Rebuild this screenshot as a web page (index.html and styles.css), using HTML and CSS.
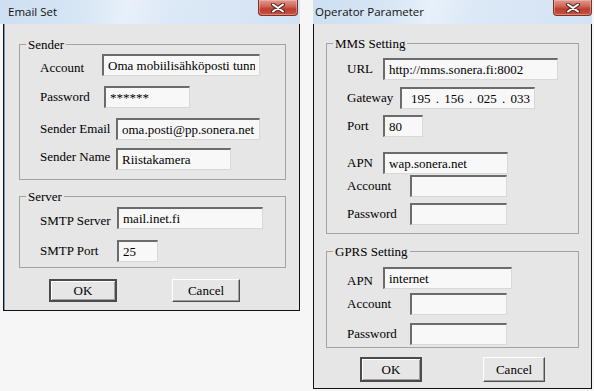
FILE: index.html
```html
<!DOCTYPE html>
<html lang="fi">
<head>
  <meta charset="UTF-8" />
  <title>Email Set / Operator Parameter</title>
  <link rel="stylesheet" href="styles.css">
</head>
<body>
  <div class="desk">

    <section class="window email">
      <header class="titlebar">
        <span class="title">Email Set</span>
        <button class="close" aria-label="Close">
          <svg width="14" height="10" viewBox="0 0 14 10">
            <path d="M2 1.5 L12 8.5 M12 1.5 L2 8.5" stroke="#5b2b27" stroke-width="4" stroke-linecap="round"/>
            <path d="M2 1.5 L12 8.5 M12 1.5 L2 8.5" stroke="#fff" stroke-width="2" stroke-linecap="round"/>
          </svg>
        </button>
      </header>
      <div class="client">
        <fieldset class="group sender">
          <legend>Sender</legend>
          <div class="row mt2">
            <label class="lbl w62 low">Account</label>
            <input class="field f158" type="text" value="Oma mobiilisähköposti tunnus" readonly>
          </div>
          <div class="row mt10">
            <label class="lbl w64">Password</label>
            <input class="field f86" type="text" value="******" readonly>
          </div>
          <div class="row mt10">
            <label class="lbl w76">Sender Email</label>
            <input class="field f144" type="text" value="oma.posti@pp.sonera.net" readonly>
          </div>
          <div class="row mt8">
            <label class="lbl w76 high">Sender Name</label>
            <input class="field f115" type="text" value="Riistakamera" readonly>
          </div>
        </fieldset>

        <fieldset class="group server">
          <legend>Server</legend>
          <div class="row mt3">
            <label class="lbl w77 low">SMTP Server</label>
            <input class="field f146" type="text" value="mail.inet.fi" readonly>
          </div>
          <div class="row mt11">
            <label class="lbl w77">SMTP Port</label>
            <input class="field f41" type="text" value="25" readonly>
          </div>
        </fieldset>

        <div class="buttons">
          <button class="btn default">OK</button>
          <button class="btn">Cancel</button>
        </div>
      </div>
    </section>

    <section class="window operator">
      <header class="titlebar">
        <span class="title">Operator Parameter</span>
        <button class="close" aria-label="Close">
          <svg width="14" height="10" viewBox="0 0 14 10">
            <path d="M2 1.5 L12 8.5 M12 1.5 L2 8.5" stroke="#5b2b27" stroke-width="4" stroke-linecap="round"/>
            <path d="M2 1.5 L12 8.5 M12 1.5 L2 8.5" stroke="#fff" stroke-width="2" stroke-linecap="round"/>
          </svg>
        </button>
      </header>
      <div class="client">
        <fieldset class="group mms">
          <legend>MMS Setting</legend>
          <div class="row mt7">
            <label class="lbl w36">URL</label>
            <input class="field f175" type="text" value="http://mms.sonera.fi:8002" readonly>
          </div>
          <div class="row mt7">
            <label class="lbl w53">Gateway</label>
            <div class="field ip f135">
              <span>195</span><span class="dot">.</span><span>156</span><span class="dot">.</span><span>025</span><span class="dot">.</span><span>033</span>
            </div>
          </div>
          <div class="row mt6">
            <label class="lbl w36">Port</label>
            <input class="field f40" type="text" value="80" readonly>
          </div>
          <div class="row mt15">
            <label class="lbl w36">APN</label>
            <input class="field f125" type="text" value="wap.sonera.net" readonly>
          </div>
          <div class="row mt1">
            <label class="lbl w63">Account</label>
            <input class="field f97" type="text" value="" readonly>
          </div>
          <div class="row mt6">
            <label class="lbl w63">Password</label>
            <input class="field f97" type="text" value="" readonly>
          </div>
        </fieldset>

        <fieldset class="group gprs">
          <legend>GPRS Setting</legend>
          <div class="row mt8">
            <label class="lbl w36 low">APN</label>
            <input class="field f129" type="text" value="internet" readonly>
          </div>
          <div class="row mt4">
            <label class="lbl w63">Account</label>
            <input class="field f97" type="text" value="" readonly>
          </div>
          <div class="row mt8">
            <label class="lbl w63">Password</label>
            <input class="field f97" type="text" value="" readonly>
          </div>
        </fieldset>

        <div class="buttons">
          <button class="btn default">OK</button>
          <button class="btn">Cancel</button>
        </div>
      </div>
    </section>

  </div>
</body>
</html>
```

FILE: styles.css
```css
* {
  box-sizing: border-box;
}

body {
  margin: 0;
  background-color: #f6f6f6;
  font-family: 'Liberation Serif', 'Times New Roman', serif;
  font-size: 13px;
  color: #000;
}

.desk {
  display: flex;
  align-items: flex-start;
  height: 391px;
  overflow: hidden;
}

/* window frame */

.window.email {
  width: 300px;
}

.window.operator {
  width: 279px;
  margin-left: 13px;
}

.titlebar {
  height: 24px;
  display: flex;
  align-items: flex-start;
  background: linear-gradient(100deg, #cddff2 0%, #d8e6f5 28%, #e8f0fa 42%, #dce8f6 58%, #d3e3f4 100%);
}

.title {
  font-family: 'Open Sans', 'Noto Sans', sans-serif;
  font-size: 11.5px;
  line-height: 23px;
  color: #111;
}

.email .title {
  padding-left: 8px;
}

.operator .title {
  padding-left: 2px;
}

.close {
  margin-left: auto;
  width: 40px;
  height: 16px;
  padding: 0;
  display: flex;
  align-items: center;
  justify-content: center;
  border: 1px solid #7d3128;
  border-top: none;
  border-radius: 0 0 4px 4px;
  background: linear-gradient(#de9a8f 0%, #cf6a5c 40%, #bb3f30 60%, #c5533f 100%);
  box-shadow: inset 0 0 0 1px rgba(255, 200, 190, 0.45);
}

.email .close {
  margin-right: 2px;
}

.operator .close {
  width: 39px;
}

.client {
  background-color: #e6e6e6;
  border: 1px solid #111;
  border-top: none;
}

.email .client {
  margin-left: 3px;
  padding: 13px 13px 8px 15px;
  box-shadow: inset 1px 0 #7f9db9;
}

.operator .client {
  padding: 12px 12px 6px 12px;
}

/* group boxes */

.group {
  margin: 0;
  padding: 0 0 0 20px;
  border: 1px solid #a3a3a3;
  min-width: 0;
}

.group legend {
  margin-left: -14px;
  padding: 0 2px;
  font-size: 13px;
  line-height: 15px;
}

.sender {
  padding-bottom: 9px;
}

.server {
  margin-top: 9px;
  padding-bottom: 5px;
}

.mms {
  padding-bottom: 8px;
}

.gprs {
  margin-top: 10px;
  padding-bottom: 2px;
}

/* rows */

.row {
  display: flex;
  align-items: center;
  height: 22px;
}

.mt1 { margin-top: 1px; }
.mt2 { margin-top: 2px; }
.mt3 { margin-top: 3px; }
.mt4 { margin-top: 4px; }
.mt6 { margin-top: 6px; }
.mt7 { margin-top: 7px; }
.mt8 { margin-top: 8px; }
.mt10 { margin-top: 10px; }
.mt11 { margin-top: 11px; }
.mt15 { margin-top: 15px; }

.lbl {
  flex: none;
  white-space: nowrap;
}

.lbl.low {
  padding-top: 6px;
}

.lbl.high {
  padding-bottom: 4px;
}

.w36 { width: 36px; }
.w53 { width: 53px; }
.w62 { width: 62px; }
.w63 { width: 63px; }
.w64 { width: 64px; }
.w76 { width: 76px; }
.w77 { width: 77px; }

.field {
  flex: none;
  height: 22px;
  margin: 0;
  padding: 0 4px;
  border-style: solid;
  border-width: 2px 1px 1px 2px;
  border-color: #6b6b6b #d8d8d8 #d8d8d8 #6b6b6b;
  background-color: #f8f8f8;
  font-family: 'Liberation Serif', 'Times New Roman', serif;
  font-size: 13px;
  color: #000;
  outline: none;
  overflow: hidden;
  white-space: nowrap;
}

.f40 { width: 40px; }
.f41 { width: 41px; }
.f86 { width: 86px; }
.f97 { width: 97px; }
.f115 { width: 115px; }
.f125 { width: 125px; }
.f129 { width: 129px; }
.f135 { width: 135px; }
.f144 { width: 144px; }
.f146 { width: 146px; }
.f158 { width: 158px; }
.f175 { width: 175px; }

.field.ip {
  display: flex;
  align-items: center;
  padding-left: 9px;
}

.ip .dot {
  width: 17px;
  text-align: center;
}

/* buttons */

.buttons {
  display: flex;
}

.email .buttons {
  margin-top: 11px;
  padding-left: 30px;
  gap: 55px;
}

.operator .buttons {
  margin-top: 9px;
  padding-left: 34px;
  gap: 61px;
}

.btn {
  width: 68px;
  height: 23px;
  padding: 0;
  font-family: 'Liberation Serif', 'Times New Roman', serif;
  font-size: 13px;
  color: #000;
  background-color: #e6e6e6;
  border: 1px solid;
  border-color: #fff #4f4f4f #4f4f4f #fff;
  box-shadow: inset -1px -1px #a0a0a0;
}

.btn.default {
  border: 2px solid #4b4b4b;
  box-shadow: inset 1px 1px #fff, inset -1px -1px #a0a0a0;
}

.operator .btn {
  width: 62px;
  height: 25px;
}
```
